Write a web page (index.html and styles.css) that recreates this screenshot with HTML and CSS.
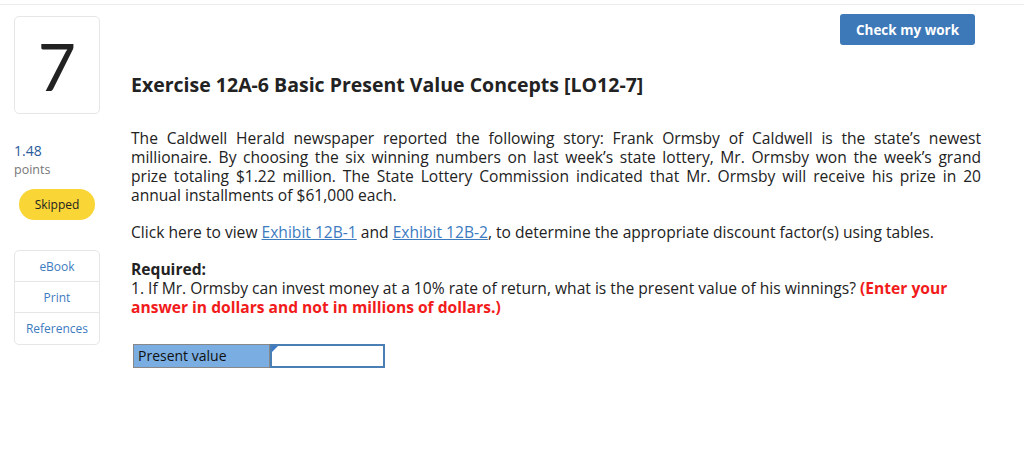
FILE: index.html
```html
<!DOCTYPE html>
<html>
<head>
<meta charset="utf-8">
<link rel="stylesheet" href="styles.css">
</head>
<body>
<div class="topline"></div>
<div class="page">
  <aside class="side">
    <div class="qnum">7</div>
    <div class="score">1.48</div>
    <div class="pts">points</div>
    <div class="pill">Skipped</div>
    <div class="links">
      <div class="link">eBook</div>
      <div class="link">Print</div>
      <div class="link">References</div>
    </div>
  </aside>
  <main class="main">
    <div class="bar"><button class="check">Check my work</button></div>
    <h1 class="title">Exercise 12A-6 Basic Present Value Concepts [LO12-7]</h1>
    <p class="para"><span class="ln">The Caldwell Herald newspaper reported the following story: Frank Ormsby of Caldwell is the state’s newest</span> <span class="ln">millionaire. By choosing the six winning numbers on last week’s state lottery, Mr. Ormsby won the week’s grand</span> <span class="ln">prize totaling $1.22 million. The State Lottery Commission indicated that Mr. Ormsby will receive his prize in 20</span> <span class="ln last">annual installments of $61,000 each.</span></p>
    <p class="click">Click here to view <a class="ex">Exhibit 12B-1</a> and <a class="ex">Exhibit 12B-2</a>, to determine the appropriate discount factor(s) using tables.</p>
    <div class="req">
      <div class="reqh">Required:</div>
      <div class="q">1. If Mr. Ormsby can invest money at a 10% rate of return, what is the present value of his winnings? <span class="red">(Enter your</span><br><span class="red">answer in dollars and not in millions of dollars.)</span></div>
    </div>
    <div class="answer">
      <div class="lbl">Present value</div>
      <div class="inp"><span class="tri"></span></div>
    </div>
  </main>
</div>
</body>
</html>
```
FILE: styles.css
```css
* { box-sizing: border-box; }
html, body { margin: 0; padding: 0; background: #fff; }
body {
  font-family: "Open Sans", Lato, sans-serif;
  color: #222;
  width: 1024px;
  height: 472px;
  overflow: hidden;
}
.topline { height: 5px; border-bottom: 1px solid #ececec; }
.page { display: flex; padding-left: 14px; }
.side { width: 86px; display: flex; flex-direction: column; }
.qnum {
  margin-top: 11px;
  height: 98px;
  border: 1px solid #e6e6e6;
  border-radius: 5px;
  display: flex; align-items: center; justify-content: center;
  font-family: Lato, sans-serif;
  font-size: 66px;
  color: #222;
}
.score { margin-top: 29px; font-size: 14px; color: #2a5b9a; line-height: 16px; }
.pts { margin-top: 3px; font-size: 12.5px; color: #777; line-height: 15px; }
.pill {
  margin: 12px 0 0 5px;
  width: 76px; height: 31px;
  border-radius: 16px;
  background: #f9d535;
  font-size: 12px;
  display: flex; align-items: center; justify-content: center;
  color: #222;
}
.links {
  margin-top: 30px;
  border: 1px solid #e6e6e6;
  border-radius: 5px;
}
.link {
  font-size: 12px; color: #3d7bbf; text-align: center;
  height: 31px; line-height: 31px;
  border-bottom: 1px solid #e6e6e6;
}
.link:last-child { border-bottom: 0; }
.main { margin-left: 31px; width: 850px; }
.bar { display: flex; justify-content: flex-end; padding-top: 9px; margin-right: 6px; }
.check {
  background: #3d78b9; color: #fff; border: 0; border-radius: 3px;
  width: 135px; height: 31px;
  font-family: inherit; font-weight: 700; font-size: 13.5px;
}
.title { margin: 28px 0 0; font-size: 19.5px; font-weight: 700; line-height: 24px; }
.para { margin: 32px 0 0; font-size: 15.6px; line-height: 19px; }
.ln { display: block; text-align: justify; text-align-last: justify; white-space: nowrap; }
.ln.last { text-align-last: left; }
.click { margin: 18px 0 0; font-size: 15.6px; line-height: 19px; }
.ex { color: #3d7bbf; text-decoration: underline; }
.req { margin-top: 18px; font-size: 15.6px; line-height: 19px; }
.reqh { font-weight: 700; }
.red { color: #f21b1b; font-weight: 700; }
.answer { display: flex; margin: 27px 0 0 2px; height: 24px; }
.lbl {
  width: 137px; background: #7aaee3; border: 1px solid #888;
  font-size: 14px; line-height: 22px; padding-left: 4px; color: #111;
}
.inp { width: 115px; border: 2px solid #4a7fb5; position: relative; background: #fff; }
.tri {
  position: absolute; left: 0; top: 0;
  width: 0; height: 0;
  border-top: 6px solid #3d78c9; border-right: 6px solid transparent;
}
```
